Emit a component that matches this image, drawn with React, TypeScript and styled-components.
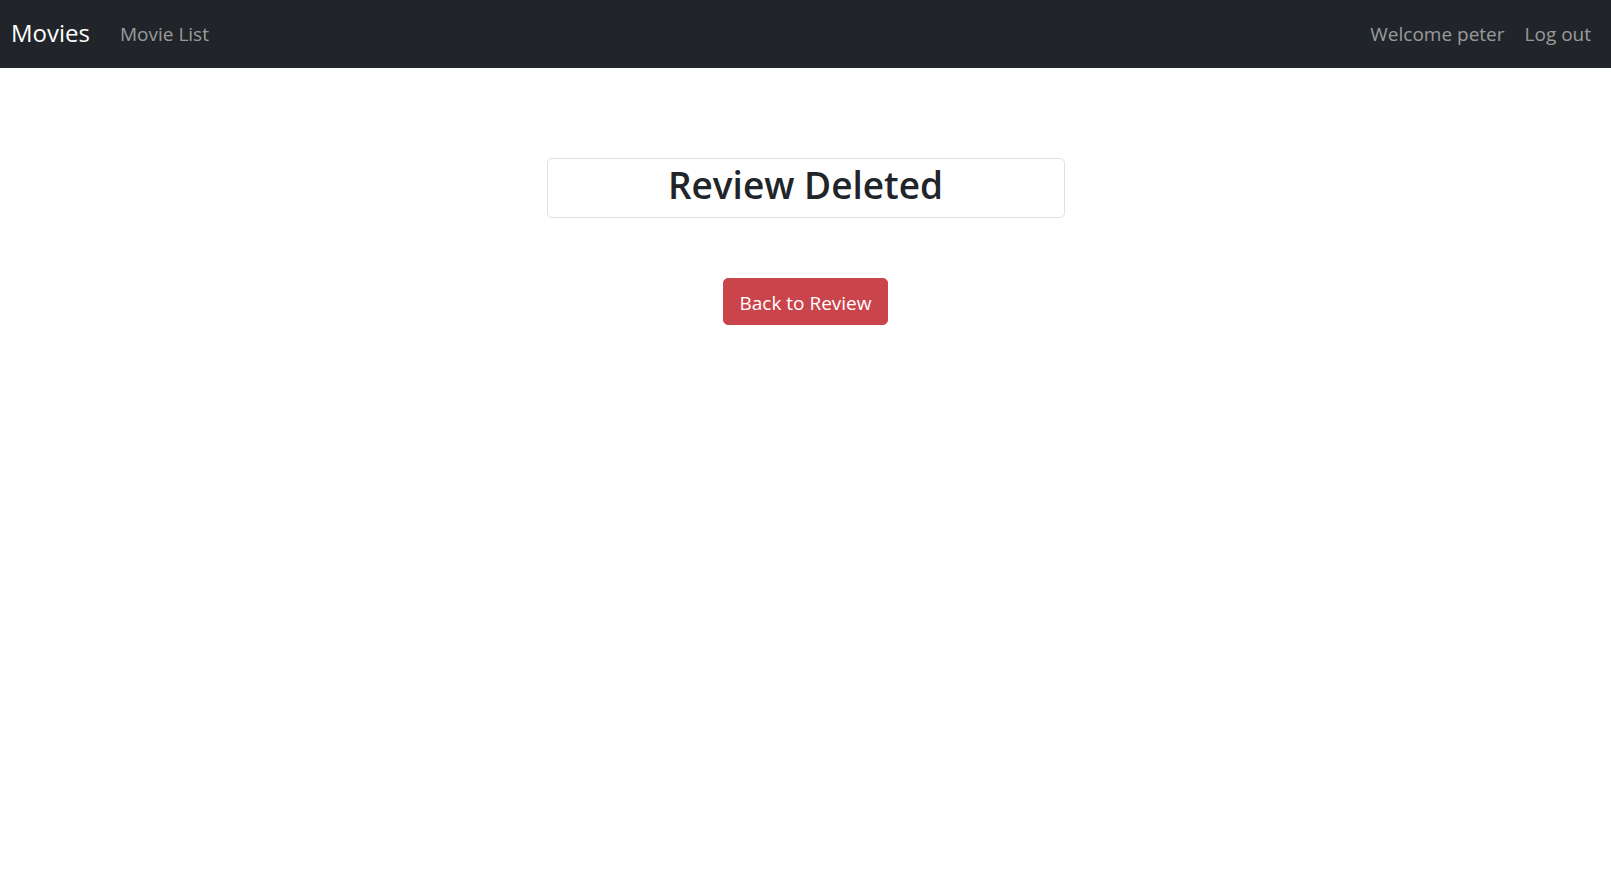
import React from 'react';
import styled, { createGlobalStyle } from 'styled-components';

const GlobalStyle = createGlobalStyle`
  body {
    margin: 0;
    background: #fff;
    font-family: "Open Sans", "Noto Sans", sans-serif;
    color: #212529;
  }
`;

const Navbar = styled.nav`
  display: flex;
  align-items: center;
  justify-content: space-between;
  height: 68px;
  padding: 0 10px 0 11px;
  background-color: #212529;
`;

const NavGroup = styled.div`
  display: flex;
  align-items: center;
`;

const Brand = styled.a`
  font-size: 24px;
  line-height: 1.2;
  color: #fff;
  text-decoration: none;
  margin-right: 20px;
  margin-top: -2px;
`;

const NavLink = styled.a`
  font-size: 19px;
  color: rgba(255, 255, 255, 0.55);
  text-decoration: none;
  padding: 0 10px;
`;

const Main = styled.main`
  display: flex;
  flex-direction: column;
  align-items: center;
  gap: 60px;
  padding-top: 90px;
`;

const Card = styled.div`
  box-sizing: border-box;
  width: 518px;
  height: 60px;
  border: 1px solid rgba(0, 0, 0, 0.125);
  border-radius: 5px;
  display: flex;
  align-items: center;
  justify-content: center;
`;

const Title = styled.h1`
  margin: 0 0 5px;
  font-size: 37px;
  font-weight: 600;
  line-height: 1.2;
`;

const DangerButton = styled.button`
  box-sizing: border-box;
  height: 47px;
  padding: 2px 15px 0;
  border: 1px solid #ca444b;
  border-radius: 5px;
  background-color: #ca444b;
  color: #fff;
  font-family: inherit;
  font-size: 19px;
  cursor: pointer;
`;

export default function App() {
  return (
    <>
      <GlobalStyle />
      <Navbar>
        <NavGroup>
          <Brand href="#">Movies</Brand>
          <NavLink href="#">Movie List</NavLink>
        </NavGroup>
        <NavGroup>
          <NavLink href="#">Welcome peter</NavLink>
          <NavLink href="#">Log out</NavLink>
        </NavGroup>
      </Navbar>
      <Main>
        <Card>
          <Title>Review Deleted</Title>
        </Card>
        <DangerButton>Back to Review</DangerButton>
      </Main>
    </>
  );
}
